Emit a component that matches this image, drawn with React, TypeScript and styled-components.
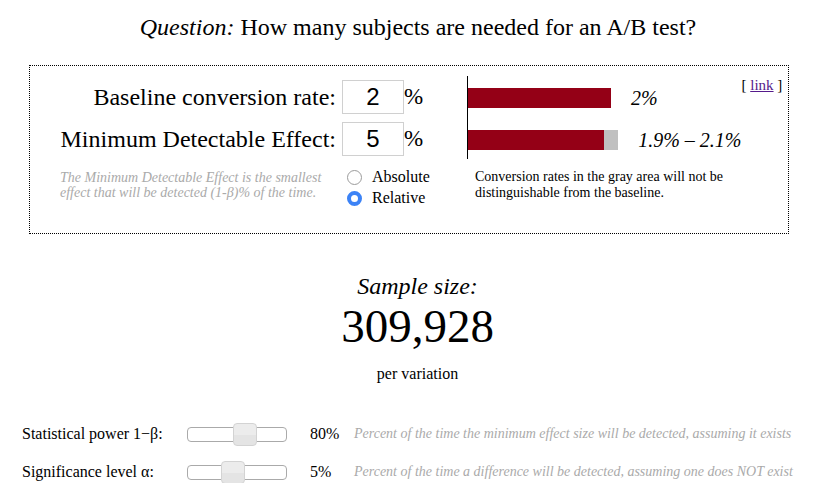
import styled, { createGlobalStyle } from 'styled-components'

const GlobalStyle = createGlobalStyle`
  body {
    margin: 0;
    background: #fff;
    color: #000;
    font-family: 'Liberation Serif', 'Times New Roman', serif;
  }
`

const Page = styled.div`
  width: 826px;
  padding-top: 12px;
`

const Title = styled.h1`
  margin: 0;
  padding-left: 10px;
  font-size: 24px;
  font-weight: normal;
  text-align: center;
  line-height: 30px;
  em {
    font-style: italic;
  }
`

const Panel = styled.section`
  box-sizing: border-box;
  width: 760px;
  height: 169px;
  margin: 23px 0 0 29px;
  border: 1px dotted #000;
  display: grid;
  grid-template-columns: 437px 1fr;
`

const Form = styled.div`
  display: grid;
  grid-template-columns: 312px 62px 30px;
  grid-auto-rows: min-content;
  row-gap: 8px;
  padding-top: 14px;
`

const Label = styled.label`
  font-size: 24px;
  text-align: right;
  line-height: 34px;
  padding-right: 6px;
`

const NumberBox = styled.div`
  box-sizing: border-box;
  height: 34px;
  border: 1px solid #d0d0d0;
  font-family: 'Liberation Sans', Arial, sans-serif;
  font-size: 24px;
  line-height: 32px;
  text-align: center;
`

const Unit = styled.span`
  font-size: 23px;
  line-height: 34px;
`

const Note = styled.p`
  margin: 6px 0 0;
  padding-left: 30px;
  font-size: 14px;
  line-height: 15px;
  font-style: italic;
  color: #aaa;
  white-space: nowrap;
`

const Options = styled.div`
  grid-column: 2 / span 2;
  margin-top: 4px;
  display: flex;
  flex-direction: column;
  gap: 3px;
`

const Option = styled.div`
  display: flex;
  align-items: center;
  font-size: 16px;
  line-height: 18px;
  gap: 10px;
  padding-left: 5px;
`

const RadioDot = styled.span<{ $checked?: boolean }>`
  box-sizing: border-box;
  width: 15px;
  height: 15px;
  border-radius: 50%;
  border: ${(p) => (p.$checked ? '4.5px solid #3c83f6' : '1px solid #9b9b9b')};
  background: #fff;
`

const Chart = styled.div`
  display: flex;
  justify-content: space-between;
  padding-right: 17px;
`

const ChartBody = styled.div`
  flex: 1;
`

const Bars = styled.div`
  margin-top: 10px;
  height: 83px;
  box-sizing: border-box;
  border-left: 1px solid #000;
  padding-top: 12px;
  display: flex;
  flex-direction: column;
  gap: 22px;
`

const BarRow = styled.div`
  display: flex;
  align-items: center;
  height: 20px;
`

const Bar = styled.div<{ $width: number }>`
  display: flex;
  width: ${(p) => p.$width}px;
  height: 20px;
  background: #c0c0c0;
`

const BarFill = styled.div<{ $width: number }>`
  width: ${(p) => p.$width}px;
  background: #940016;
`

const BarLabel = styled.span`
  margin-left: 20px;
  font-size: 20px;
  font-style: italic;
  white-space: nowrap;
`

const Caption = styled.p`
  margin: 10px 0 0 8px;
  font-size: 14px;
  line-height: 16px;
  white-space: nowrap;
`

const LinkBox = styled.span`
  margin-top: 11px;
  font-size: 15px;
  white-space: nowrap;
  a {
    color: #551a8b;
  }
`

const Result = styled.div`
  margin-top: 38px;
  padding-left: 9px;
  text-align: center;
`

const ResultTitle = styled.div`
  font-size: 24px;
  font-style: italic;
  line-height: 28px;
`

const ResultValue = styled.div`
  font-size: 47px;
  line-height: 52px;
`

const ResultUnit = styled.div`
  margin-top: 13px;
  font-size: 16px;
  line-height: 18px;
`

const Settings = styled.div`
  margin-top: 40px;
  padding-left: 22px;
  display: grid;
  grid-template-columns: 165px 100px 44px 1fr;
  row-gap: 16px;
  align-items: center;
  font-size: 16px;
`

const SliderCell = styled.div`
  height: 22px;
  display: flex;
  align-items: center;
`

const Track = styled.div`
  position: relative;
  box-sizing: border-box;
  width: 100px;
  height: 15px;
  border: 1px solid #aaa;
  border-radius: 4px;
  background: #fff;
`

const Thumb = styled.span<{ $pos: number }>`
  position: absolute;
  top: -5px;
  left: ${(p) => p.$pos}px;
  box-sizing: border-box;
  width: 24px;
  height: 23px;
  border: 1px solid #d3d3d3;
  border-radius: 4px;
  background: linear-gradient(#ececec, #ececec 50%, #e4e4e4 50%, #e4e4e4);
`

const Value = styled.span`
  padding-left: 23px;
`

const Hint = styled.span`
  padding-left: 23px;
  font-size: 14px;
  font-style: italic;
  color: #aaa;
  white-space: nowrap;
`

const PX_PER_PCT = 71.5

export default function App() {
  const baseline = 2
  const low = 1.9
  const high = 2.1
  return (
    <Page>
      <GlobalStyle />
      <Title>
        <em>Question:</em> How many subjects are needed for an A/B test?
      </Title>
      <Panel>
        <Form>
          <Label>Baseline conversion rate:</Label>
          <NumberBox>2</NumberBox>
          <Unit>%</Unit>
          <Label>Minimum Detectable Effect:</Label>
          <NumberBox>5</NumberBox>
          <Unit>%</Unit>
          <Note>
            The Minimum Detectable Effect is the smallest
            <br />
            effect that will be detected (1-β)% of the time.
          </Note>
          <Options>
            <Option>
              <RadioDot />
              Absolute
            </Option>
            <Option>
              <RadioDot $checked />
              Relative
            </Option>
          </Options>
        </Form>
        <Chart>
          <ChartBody>
            <Bars>
              <BarRow>
                <Bar $width={baseline * PX_PER_PCT}>
                  <BarFill $width={baseline * PX_PER_PCT} />
                </Bar>
                <BarLabel>2%</BarLabel>
              </BarRow>
              <BarRow>
                <Bar $width={high * PX_PER_PCT}>
                  <BarFill $width={low * PX_PER_PCT} />
                </Bar>
                <BarLabel>1.9% – 2.1%</BarLabel>
              </BarRow>
            </Bars>
            <Caption>
              Conversion rates in the gray area will not be
              <br />
              distinguishable from the baseline.
            </Caption>
          </ChartBody>
          <LinkBox>
            [ <a href="#">link</a> ]
          </LinkBox>
        </Chart>
      </Panel>
      <Result>
        <ResultTitle>Sample size:</ResultTitle>
        <ResultValue>309,928</ResultValue>
        <ResultUnit>per variation</ResultUnit>
      </Result>
      <Settings>
        <span>Statistical power 1−β:</span>
        <SliderCell>
          <Track>
            <Thumb $pos={45} />
          </Track>
        </SliderCell>
        <Value>80%</Value>
        <Hint>Percent of the time the minimum effect size will be detected, assuming it exists</Hint>
        <span>Significance level α:</span>
        <SliderCell>
          <Track>
            <Thumb $pos={33} />
          </Track>
        </SliderCell>
        <Value>5%</Value>
        <Hint>Percent of the time a difference will be detected, assuming one does NOT exist</Hint>
      </Settings>
    </Page>
  )
}
